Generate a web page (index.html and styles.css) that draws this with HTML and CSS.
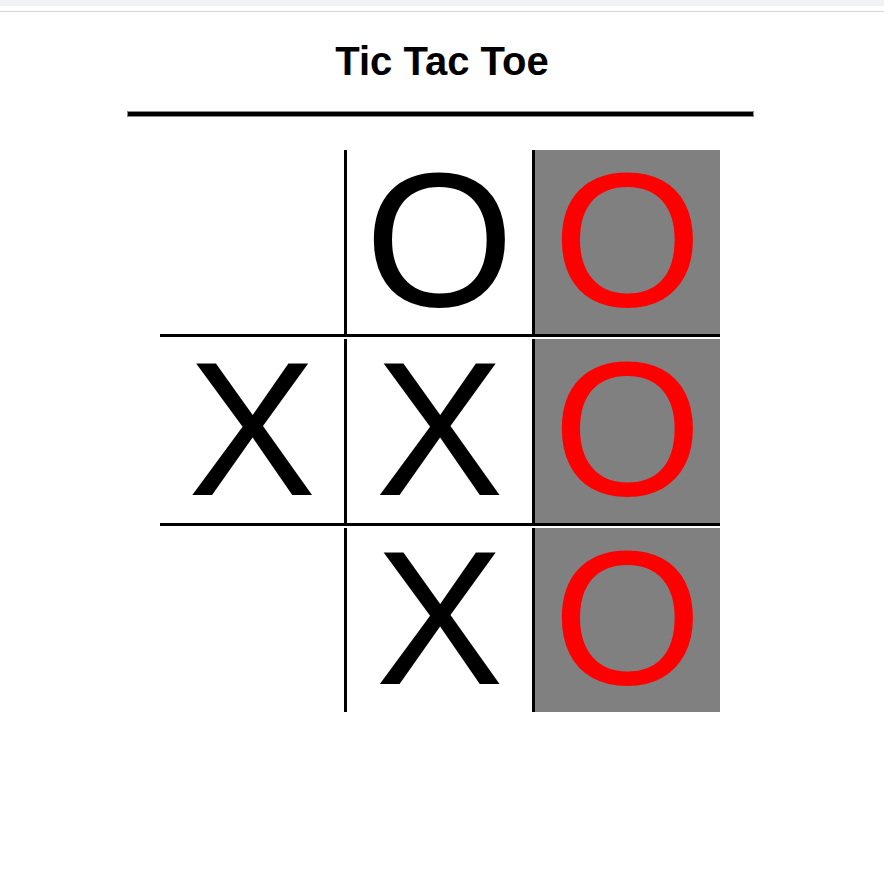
FILE: index.html
```html
<!DOCTYPE html>
<html>
<head>
<meta charset="utf-8">
<link rel="stylesheet" href="styles.css">
</head>
<body>
<div class="chrome"></div>
<main class="game">
  <h1 class="title">Tic Tac Toe</h1>
  <div class="rule"></div>
  <div class="board">
    <div class="cell r c"></div>
    <div class="cell r c">O</div>
    <div class="cell r win">O</div>
    <div class="cell r c">X</div>
    <div class="cell r c">X</div>
    <div class="cell r win">O</div>
    <div class="cell c"></div>
    <div class="cell c">X</div>
    <div class="cell win">O</div>
  </div>
</main>
</body>
</html>
```
FILE: styles.css
```css
html, body {
  margin: 0;
  padding: 0;
  background: #fff;
}
body {
  font-family: "Liberation Sans", Arial, sans-serif;
  color: #000;
}
.chrome {
  height: 6px;
  background: #f1f2f4;
}
.game {
  border-top: 1px solid #d6d6d6;
  margin-top: 5px;
  display: flex;
  flex-direction: column;
  align-items: flex-start;
}
.title {
  align-self: center;
  margin: 27px 0 0 0;
  font-size: 40px;
  line-height: 45px;
  font-weight: bold;
}
.rule {
  margin: 27px 0 0 127px;
  width: 625px;
  height: 4px;
  background: #000;
  border: 1px solid #8a8a8a;
}
.board {
  margin: 33px 0 0 160px;
  display: grid;
  grid-template-columns: 187px 188px 185px;
  row-gap: 2px;
}
.cell {
  box-sizing: border-box;
  height: 184px;
  font-size: 192px;
  line-height: 180px;
  text-align: center;
}
.cell.r {
  height: 187px;
  border-bottom: 3px solid #000;
}
.cell.c {
  border-right: 3px solid #000;
}
.cell.win {
  background: #808080;
  color: #ff0000;
}
```
